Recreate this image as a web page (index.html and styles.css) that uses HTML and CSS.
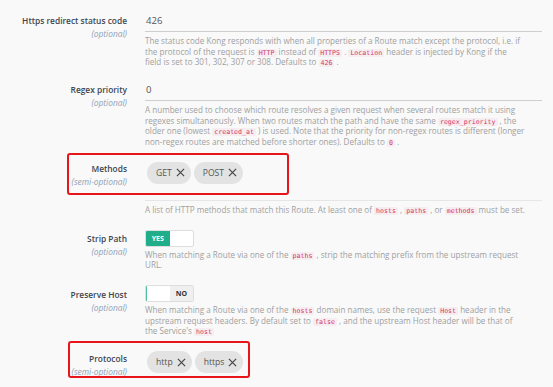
FILE: index.html
```html
<!DOCTYPE html>
<html lang="en">
<head>
  <meta charset="UTF-8" />
  <title>Route form</title>
  <link rel="stylesheet" href="styles.css">
</head>
<body>
  <div class="form">
    <div class="row">
      <div class="label">Https redirect status code<em>(optional)</em></div>
      <div class="field">
        <div class="text-input">426</div>
        <p class="help">The status code Kong responds with when all properties of a Route match except the protocol, i.e. if<br>the protocol of the request is <code>HTTP</code> instead of <code>HTTPS</code> . <code>Location</code> header is injected by Kong if the<br>field is set to 301, 302, 307 or 308. Defaults to <code>426</code> .</p>
      </div>
    </div>

    <div class="row">
      <div class="label">Regex priority<em>(optional)</em></div>
      <div class="field">
        <div class="text-input">0</div>
        <p class="help">A number used to choose which route resolves a given request when several routes match it using<br>regexes simultaneously. When two routes match the path and have the same <code>regex_priority</code> , the<br>older one (lowest <code>created_at</code> ) is used. Note that the priority for non-regex routes is different (longer<br>non-regex routes are matched before shorter ones). Defaults to <code>0</code> .</p>
      </div>
    </div>

    <div class="row marked">
      <span class="mark mark-methods"></span>
      <div class="label">Methods<em>(semi-optional)</em></div>
      <div class="field">
        <div class="chips chips-field">
          <span class="chip">GET <svg viewBox="0 0 10 10"><path d="M1 1L9 9M9 1L1 9"/></svg></span>
          <span class="chip">POST <svg viewBox="0 0 10 10"><path d="M1 1L9 9M9 1L1 9"/></svg></span>
        </div>
        <p class="help">A list of HTTP methods that match this Route. At least one of <code>hosts</code> , <code>paths</code> , or <code>methods</code> must be set.</p>
      </div>
    </div>

    <div class="row">
      <div class="label label-toggle">Strip Path<em>(optional)</em></div>
      <div class="field">
        <div class="toggle on"><span class="yes">YES</span><span class="blank"></span></div>
        <p class="help help-toggle">When matching a Route via one of the <code>paths</code> , strip the matching prefix from the upstream request<br>URL.</p>
      </div>
    </div>

    <div class="row">
      <div class="label label-toggle">Preserve Host<em>(optional)</em></div>
      <div class="field">
        <div class="toggle off"><span class="blank"></span><span class="no">NO</span></div>
        <p class="help help-toggle">When matching a Route via one of the <code>hosts</code> domain names, use the request <code>Host</code> header in the<br>upstream request headers. By default set to <code>false</code> , and the upstream Host header will be that of<br>the Service's <code>host</code></p>
      </div>
    </div>

    <div class="row marked">
      <span class="mark mark-protocols"></span>
      <div class="label">Protocols<em>(semi-optional)</em></div>
      <div class="field">
        <div class="chips">
          <span class="chip">http <svg viewBox="0 0 10 10"><path d="M1 1L9 9M9 1L1 9"/></svg></span>
          <span class="chip">https <svg viewBox="0 0 10 10"><path d="M1 1L9 9M9 1L1 9"/></svg></span>
        </div>
      </div>
    </div>
  </div>
</body>
</html>
```

FILE: styles.css
```css
body {
  margin: 0;
  background: #f9f9f9;
  font-family: 'Open Sans', 'DejaVu Sans', sans-serif;
  color: #9b9b9b;
  overflow: hidden;
}
.form {
  padding-top: 13px;
}
.row {
  display: grid;
  grid-template-columns: 127px 397px;
  column-gap: 18px;
  margin-bottom: 14.5px;
  position: relative;
}
.label {
  text-align: right;
  font-size: 8.4px;
  font-weight: 600;
  color: #3d4751;
  line-height: 13px;
  padding-top: 0.5px;
}
.label em {
  display: block;
  font-weight: 400;
  font-size: 8.4px;
  color: #8ea2b7;
}
.label-toggle {
  padding-top: 2.5px;
}
.text-input {
  height: 18px;
  line-height: 16px;
  font-size: 9.6px;
  color: #555;
  border-bottom: 1px solid #cfcfcf;
  padding-left: 1px;
}
.help {
  margin: 4px 0 0;
  font-size: 8.1px;
  line-height: 10.5px;
  color: #a0a0a0;
  white-space: nowrap;
}
.help-toggle {
  margin-top: 3px;
}
code {
  font-family: 'DejaVu Sans Mono', monospace;
  font-size: 6.6px;
  line-height: 1;
  color: #d63369;
  background: #f5edf0;
  padding: 0 2px;
  border-radius: 2px;
}
.chips {
  display: flex;
  gap: 3px;
  padding-left: 2px;
}
.chips-field {
  padding-bottom: 16px;
  border-bottom: 1px solid #e6e6e6;
}
.chip {
  display: inline-flex;
  align-items: center;
  gap: 4px;
  height: 22px;
  padding: 0 6px 0 9px;
  border-radius: 11px;
  background: #e3e3e3;
  color: #555;
  font-size: 8.6px;
}
.chip svg {
  width: 9px;
  height: 9px;
  stroke: #444;
  stroke-width: 1.3;
  fill: none;
}
.toggle {
  display: flex;
  width: 47px;
  height: 15px;
  border: 1px solid #dedede;
  border-radius: 2px;
  background: #fff;
  overflow: hidden;
  font-size: 7px;
  font-weight: 700;
}
.toggle span {
  flex: 1;
  display: flex;
  align-items: center;
  justify-content: center;
}
.toggle .yes {
  background: #1fae89;
  color: #fff;
}
.toggle .no {
  background: #efefef;
  color: #333;
}
.toggle.off .blank {
  border-left: 1px solid #4fbf9f;
}
.mark {
  position: absolute;
  border: 2px solid #e8161b;
  border-radius: 3px;
  pointer-events: none;
}
.mark-methods {
  left: 67px;
  top: -9px;
  width: 218px;
  height: 38px;
}
.mark-protocols {
  left: 68px;
  top: -10px;
  width: 178px;
  height: 33px;
}
```
